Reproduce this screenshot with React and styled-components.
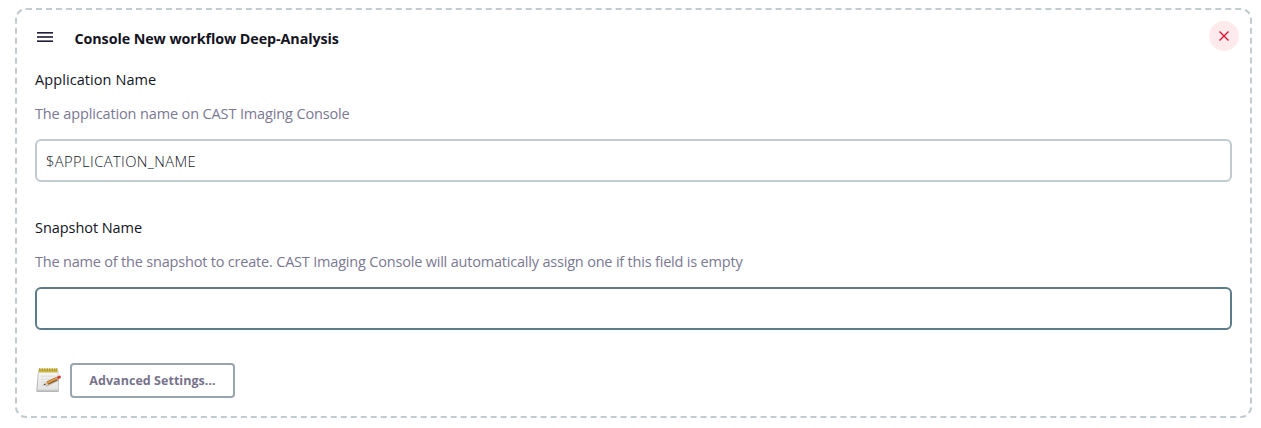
import React from "react";
import styled, { createGlobalStyle } from "styled-components";

const GlobalStyle = createGlobalStyle`
  *, *::before, *::after { box-sizing: border-box; }
  body {
    margin: 0;
    background: #fff;
    font-family: "Segoe UI", "Open Sans", "Noto Sans", sans-serif;
    font-size: 14px;
    color: #14141e;
  }
`;

const Card = styled.section`
  height: 410px;
  margin: 8px 9px 0 15px;
  padding: 11px 18px 0;
  border: 2px dashed #c1cbd0;
  border-radius: 11px;
  background: #fff;
`;

const Header = styled.header`
  display: flex;
  align-items: center;
  height: 30px;
  margin-right: -7px;
`;

const DragHandle = styled.svg`
  flex: none;
  margin: 2px 20.5px 0 1px;
`;

const Title = styled.h1`
  flex: 1;
  margin: 6px 0 0;
  font-size: 14.3px;
  line-height: 20px;
  font-weight: 700;
  letter-spacing: -0.08px;
`;

const CloseButton = styled.button`
  display: flex;
  align-items: center;
  justify-content: center;
  width: 30px;
  height: 30px;
  padding: 0;
  border: 0;
  border-radius: 50%;
  background: #fdeaec;
  color: #dc0a2d;
`;

const Field = styled.div`
  display: flex;
  flex-direction: column;
  height: 148px;
  padding-top: 18px;
`;

const Label = styled.label`
  font-size: 14.5px;
  line-height: 22px;
  font-weight: 500;
  letter-spacing: ${(p) => p.$spacing || "0"};
`;

const Hint = styled.p`
  margin: 12px 0 14px;
  font-size: 14.5px;
  line-height: 22px;
  letter-spacing: ${(p) => p.$spacing || "0"};
  color: #7b7893;
`;

const Input = styled.input`
  width: 100%;
  height: 43px;
  padding: 0 9px;
  border: 2px solid ${(p) => (p.$active ? "#5c7c8c" : "#c1cbd0")};
  border-radius: 6px;
  outline: none;
  background: #fff;
  color: #14141e;
  font: 300 14.7px "Segoe UI", "Open Sans", "Noto Sans", sans-serif;
  letter-spacing: 0.42px;
`;

const Footer = styled.footer`
  display: flex;
  align-items: flex-start;
  gap: 9px;
  padding-top: 16px;
`;

const MemoIcon = styled.svg`
  flex: none;
  margin-top: 4px;
`;

const SettingsButton = styled.button`
  width: 165px;
  height: 35px;
  padding: 0;
  border: 2px solid #98a5ad;
  border-radius: 4px;
  background: #fff;
  color: #77738c;
  font: 700 12.5px "Segoe UI", "Open Sans", "Noto Sans", sans-serif;
  letter-spacing: 0.04px;
  white-space: nowrap;
`;

export default function App() {
  return (
    <>
      <GlobalStyle />
      <Card>
        <Header>
          <DragHandle width="18" height="12" viewBox="0 0 18 12" shapeRendering="crispEdges">
            <path d="M1 1h16v1H1zM1 10h16v1H1z" fill="#211d34" />
            <path d="M1 2h16v1H1zM1 9h16v1H1z" fill="#77748a" />
            <path d="M1 5h16v2H1z" fill="#4a465c" />
          </DragHandle>
          <Title>Console New workflow Deep-Analysis</Title>
          <CloseButton aria-label="Remove">
            <svg width="10" height="10" viewBox="0 0 10 10" fill="none" stroke="currentColor" strokeWidth="1.3">
              <path d="M.5.5l9 9M9.5.5l-9 9" />
            </svg>
          </CloseButton>
        </Header>
        <Field>
          <Label htmlFor="application" $spacing="0.08px">Application Name</Label>
          <Hint $spacing="-0.135px">The application name on CAST Imaging Console</Hint>
          <Input id="application" defaultValue="$APPLICATION_NAME" />
        </Field>
        <Field>
          <Label htmlFor="snapshot" $spacing="-0.06px">Snapshot Name</Label>
          <Hint $spacing="-0.195px">The name of the snapshot to create. CAST Imaging Console will automatically assign one if this field is empty</Hint>
          <Input id="snapshot" $active />
        </Field>
        <Footer>
          <MemoIcon width="26" height="26" viewBox="-0.8 -0.7 26 26">
            <defs>
              <linearGradient id="paper" x1="0" y1="0" x2="0" y2="1">
                <stop offset="0" stopColor="#f7f7f7" />
                <stop offset="1" stopColor="#e2e2e2" />
              </linearGradient>
            </defs>
            <path d="M2.3 2.5h20.2l.6 20.8q0 1-1 1h-20.6q-1 0-1-1z" fill="#b5b5b5" />
            <path d="M2.9 2.5h19l.5 20.2H1.7z" fill="url(#paper)" />
            <path d="M1.5 22.5h21" stroke="#c4c4c4" />
            <path d="M5 8.5h14M5 11.5h12M5 14.5h8M5 17.5h5" stroke="#d9d9d9" />
            <path d="M3 1h18.5v3.8h-18.5z" fill="#cbb944" />
            <path d="M4 .5v3M6.5 .5v3M9 .5v3M11.5 .5v3M14 .5v3M16.5 .5v3M19 .5v3M21 .5v3" stroke="#a8952a" />
            <path d="M10 18.6l13-6.2" stroke="#aaa" strokeOpacity=".6" strokeWidth="1.6" />
            <path d="M7.5 17.5l3.5-3.6 1.5 2.9z" fill="#e5c195" />
            <path d="M7.5 17.5l1.6-1.7.8 1.3z" fill="#35251a" />
            <path d="M11.7 15.5l9.6-4.6" stroke="#8a5518" strokeWidth="3.5" />
            <path d="M11.6 15.1l9.6-4.6" stroke="#dd9d48" strokeWidth="1.9" />
            <path d="M21 10.8l1.6-.8" stroke="#b3b3b3" strokeWidth="3.3" />
            <path d="M22.7 9.8l.9-.4" stroke="#dd3a30" strokeWidth="2.9" strokeLinecap="round" />
          </MemoIcon>
          <SettingsButton>Advanced Settings...</SettingsButton>
        </Footer>
      </Card>
    </>
  );
}
